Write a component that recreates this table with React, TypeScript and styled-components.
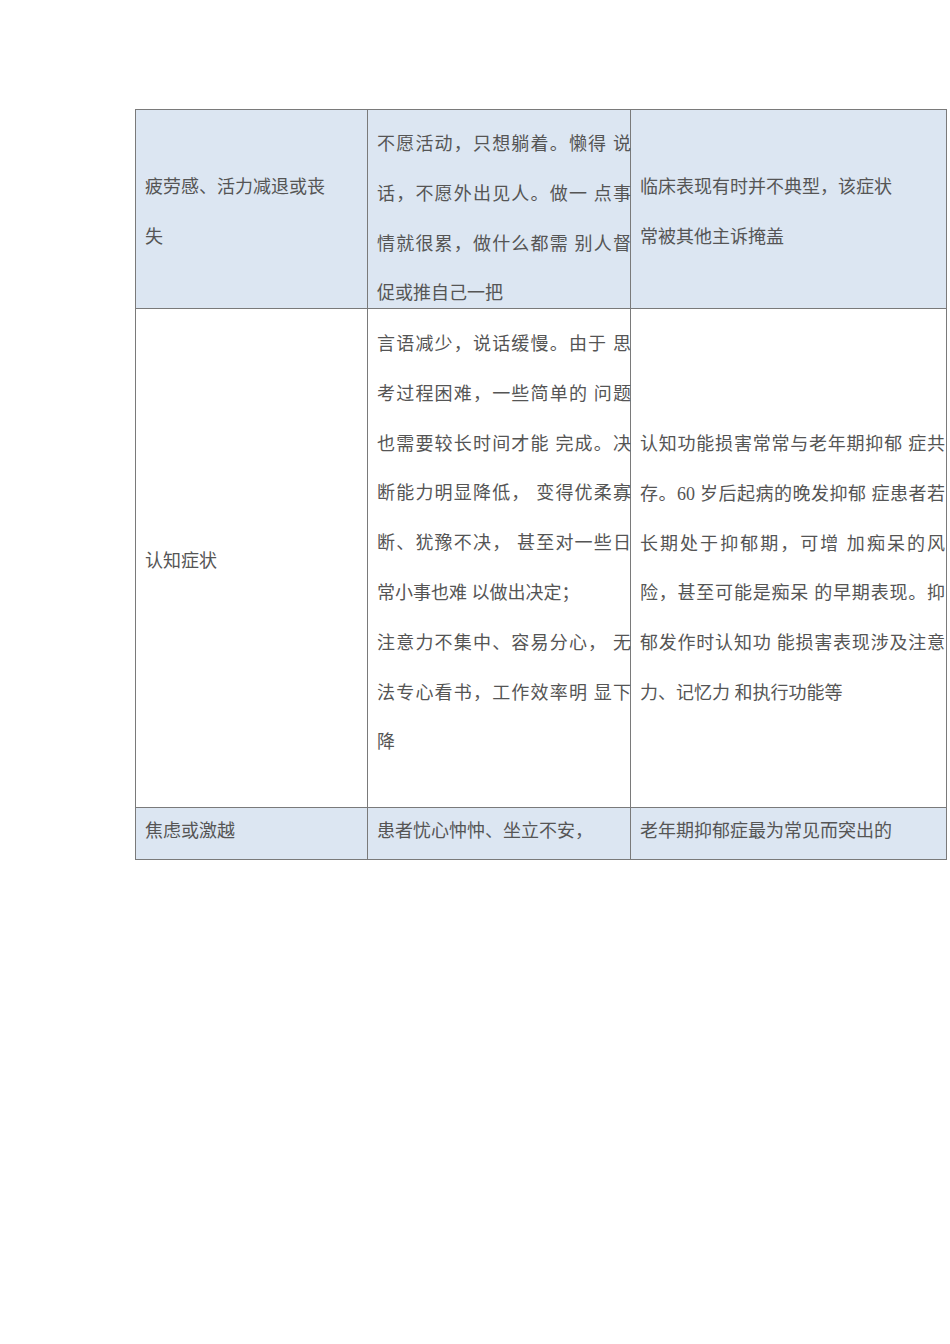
import React from 'react'
import styled, { createGlobalStyle } from 'styled-components'

const GlobalStyle = createGlobalStyle`
    html, body {
        margin: 0;
        padding: 0;
        background: #ffffff;
    }
    body {
        font-family: "Liberation Serif", "Noto Sans CJK SC", serif;
        color: #555555;
    }
`

const Page = styled.div`
    width: 950px;
    min-height: 1344px;
    padding: 109px 0 0 135px;
    box-sizing: border-box;
`

const Table = styled.div`
    display: grid;
    grid-template-columns: 232px 263px 316px;
    grid-template-rows: 199px 499px 52px;
    border-top: 1px solid #7a7a7a;
    border-left: 1px solid #7a7a7a;
    width: max-content;
`

const Cell = styled.div<{ $shaded?: boolean; $top: number; $compact?: boolean }>`
    box-sizing: border-box;
    border-right: 1px solid #7a7a7a;
    border-bottom: 1px solid #7a7a7a;
    background: ${p => (p.$shaded ? '#dce6f2' : '#ffffff')};
    padding: ${p => p.$top}px 0 0 9px;
    font-size: 18px;
    line-height: ${p => (p.$compact ? '30px' : '49.8px')};
    overflow: visible;
`

const Line = styled.div<{ $justify?: boolean }>`
    white-space: nowrap;
    text-align: ${p => (p.$justify ? 'justify' : 'left')};
    text-align-last: ${p => (p.$justify ? 'justify' : 'left')};
    text-justify: inter-character;
`

const TextBlock = styled.div`
    display: flex;
    flex-direction: column;
`

type RowData = {
    shaded: boolean
    compact?: boolean
    cells: { top: number; width: number; lines: string[]; justify: number }[]
}

const rows: RowData[] = [
    {
        shaded: true,
        cells: [
            { top: 53, width: 222, lines: ['疲劳感、活力减退或丧', '失'], justify: 0 },
            {
                top: 10,
                width: 254,
                lines: ['不愿活动，只想躺着。懒得 说', '话，不愿外出见人。做一 点事', '情就很累，做什么都需 别人督', '促或推自己一把'],
                justify: 3,
            },
            { top: 53, width: 305, lines: ['临床表现有时并不典型，该症状', '常被其他主诉掩盖'], justify: 0 },
        ],
    },
    {
        shaded: false,
        cells: [
            { top: 228, width: 222, lines: ['认知症状'], justify: 0 },
            {
                top: 11,
                width: 254,
                lines: [
                    '言语减少，说话缓慢。由于 思',
                    '考过程困难，一些简单的 问题',
                    '也需要较长时间才能 完成。决',
                    '断能力明显降低， 变得优柔寡',
                    '断、犹豫不决， 甚至对一些日',
                    '常小事也难 以做出决定；',
                    '注意力不集中、容易分心， 无',
                    '法专心看书，工作效率明 显下',
                    '降',
                ],
                justify: -1,
            },
            {
                top: 111,
                width: 305,
                lines: [
                    '认知功能损害常常与老年期抑郁 症共',
                    '存。60 岁后起病的晚发抑郁 症患者若',
                    '长期处于抑郁期，可增 加痴呆的风',
                    '险，甚至可能是痴呆 的早期表现。抑',
                    '郁发作时认知功 能损害表现涉及注意',
                    '力、记忆力 和执行功能等',
                ],
                justify: 5,
            },
        ],
    },
    {
        shaded: true,
        compact: true,
        cells: [
            { top: 8, width: 222, lines: ['焦虑或激越'], justify: 0 },
            { top: 8, width: 254, lines: ['患者忧心忡忡、坐立不安，'], justify: 0 },
            { top: 8, width: 305, lines: ['老年期抑郁症最为常见而突出的'], justify: 0 },
        ],
    },
]

// lines that close a paragraph inside the justified middle cell
const paragraphEnds = new Set(['常小事也难 以做出决定；', '降'])

export default function App() {
    return (
        <>
            <GlobalStyle />
            <Page>
                <Table>
                    {rows.map((row, r) =>
                        row.cells.map((cell, c) => (
                            <Cell key={`${r}-${c}`} $shaded={row.shaded} $top={cell.top} $compact={row.compact}>
                                <TextBlock style={{ width: cell.width }}>
                                    {cell.lines.map((line, i) => {
                                        const justify =
                                            cell.justify === -1 ? !paragraphEnds.has(line) : i < cell.justify
                                        return (
                                            <Line key={i} $justify={justify}>
                                                {line}
                                            </Line>
                                        )
                                    })}
                                </TextBlock>
                            </Cell>
                        ))
                    )}
                </Table>
            </Page>
        </>
    )
}
